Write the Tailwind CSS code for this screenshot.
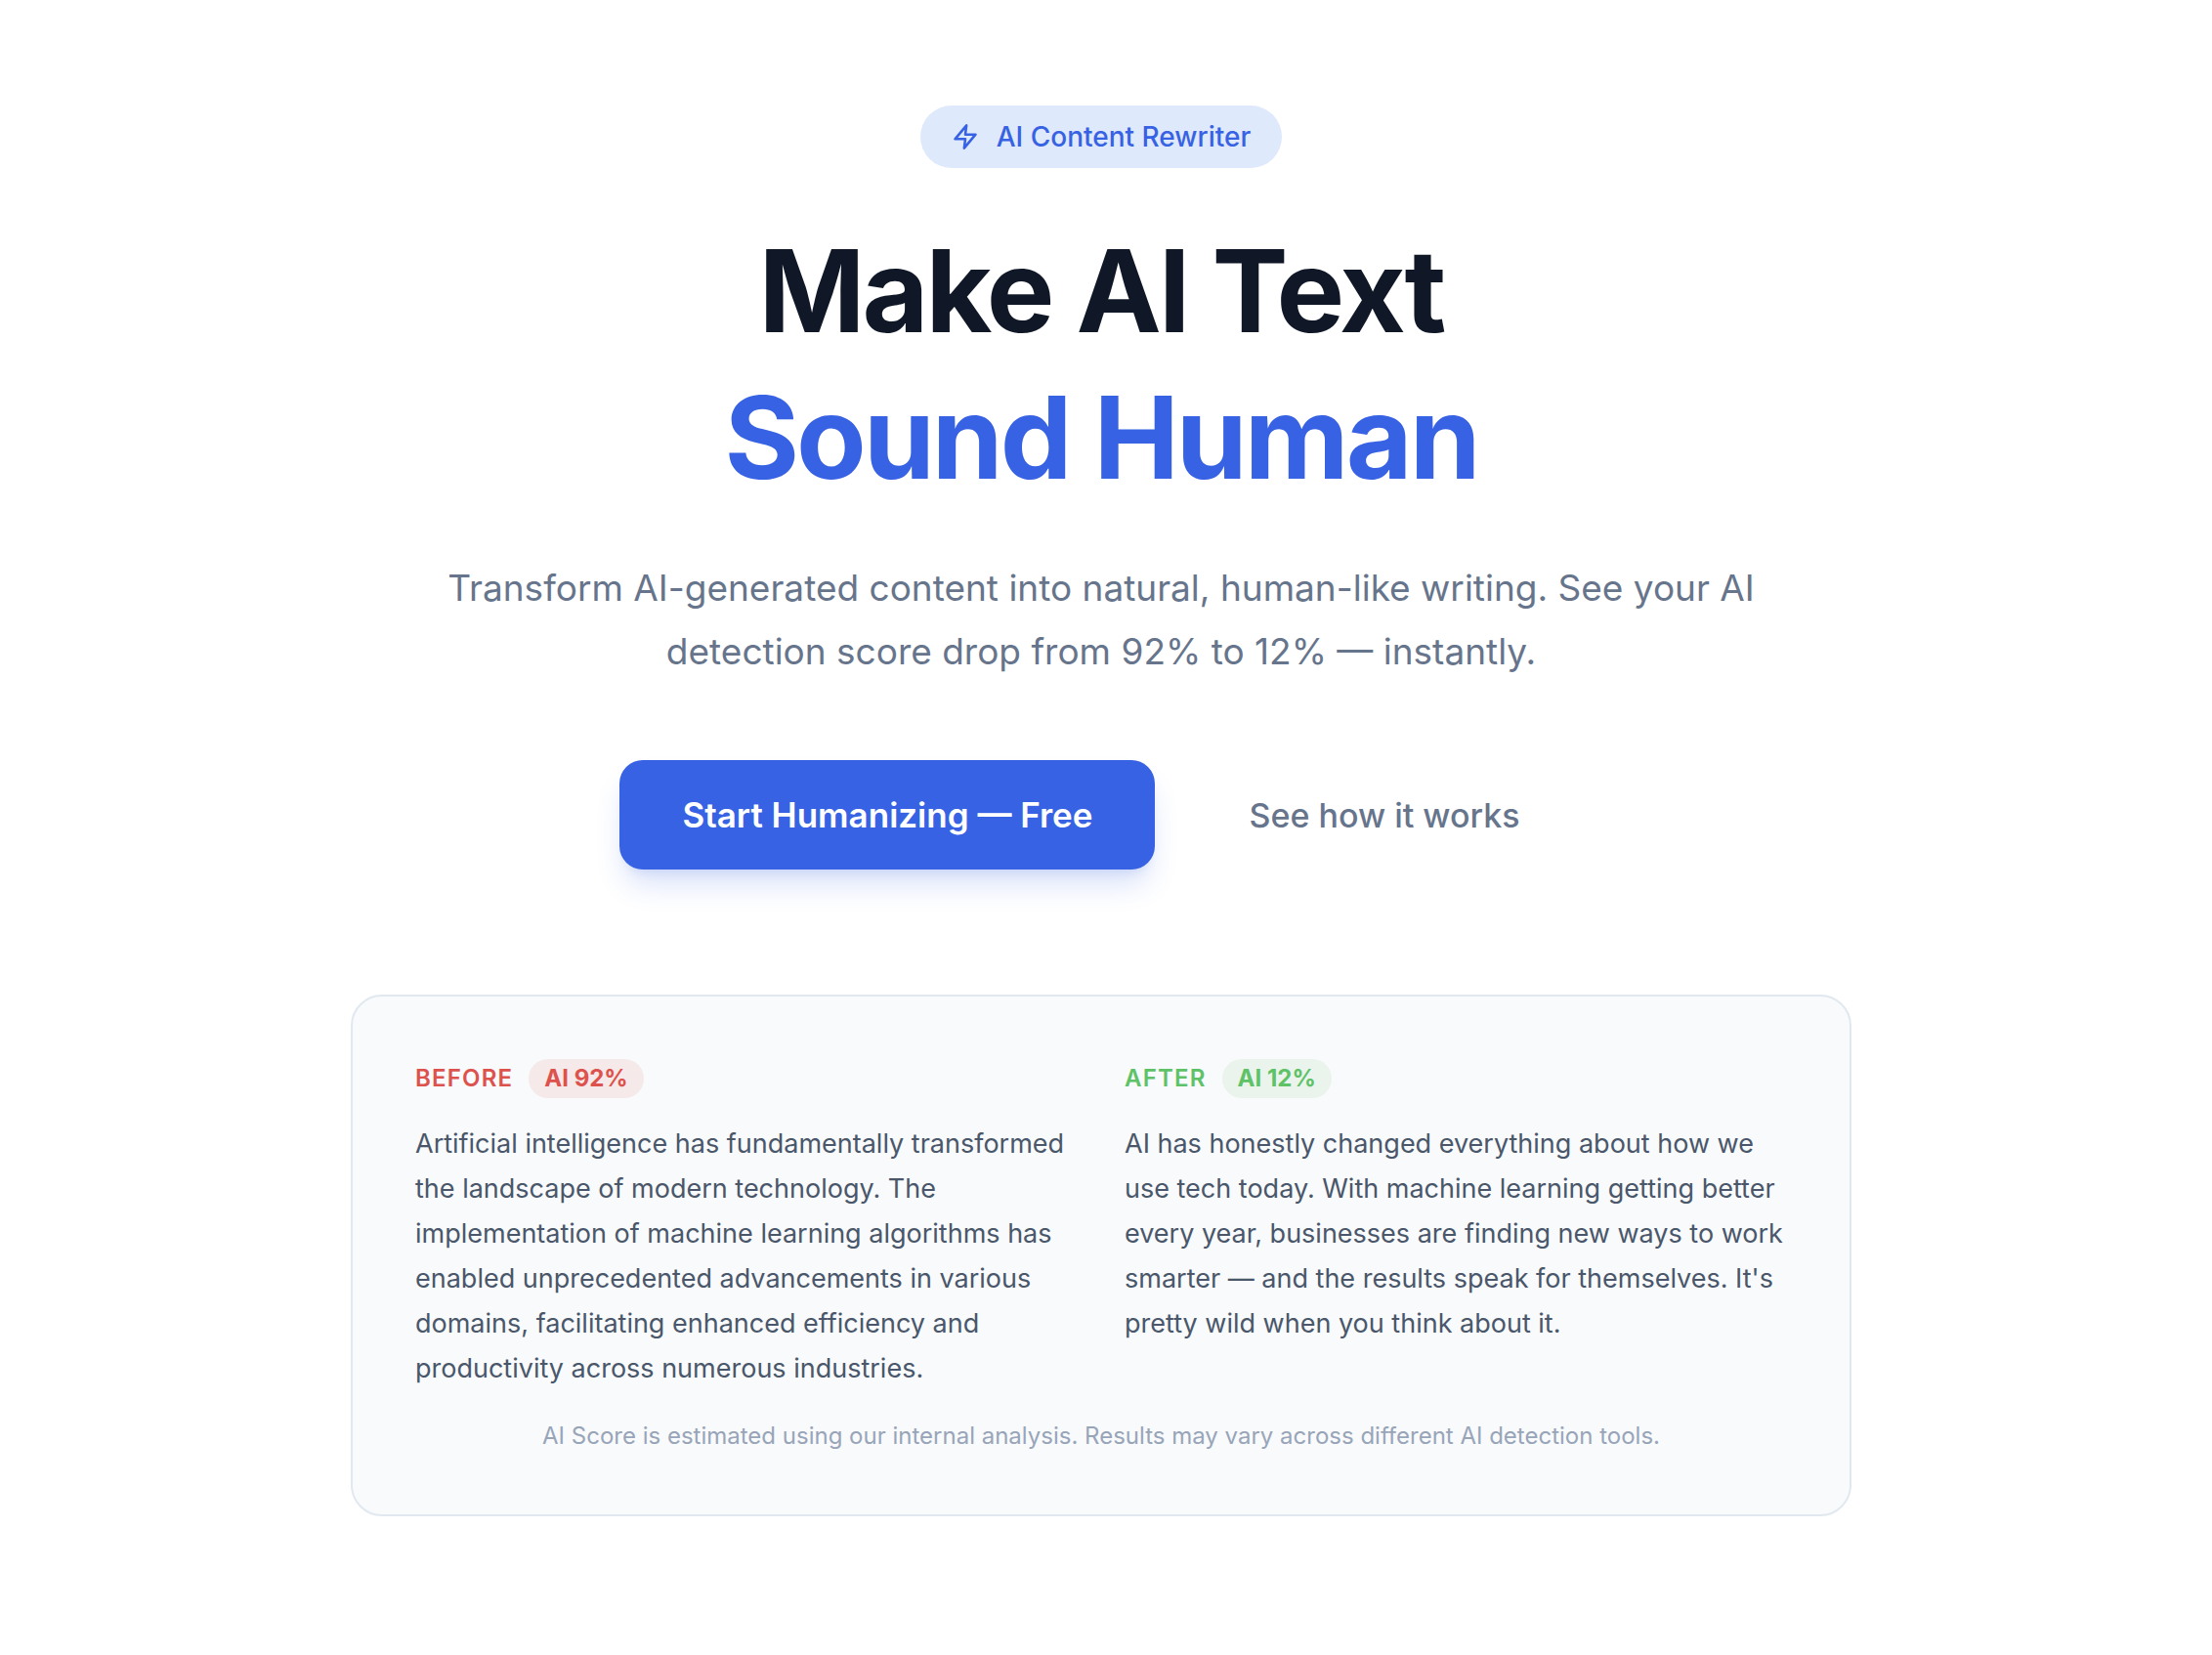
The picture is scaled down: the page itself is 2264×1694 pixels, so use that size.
<!DOCTYPE html>
<html lang="en">
<head>
    <meta charset="UTF-8">
    <meta name="viewport" content="width=device-width, initial-scale=1.0">
    <title>AI Content Rewriter</title>

    <!-- Tailwind CSS CDN -->
    <script src="https://cdn.jsdelivr.net/npm/@tailwindcss/browser@4"></script>
</head>
<body class="bg-white font-['Inter',sans-serif] antialiased">

    <!-- Hero -->
    <main class="flex flex-col items-center pt-27 pb-36 pl-8 pr-[42px] text-center">

        <!-- Badge -->
        <div class="inline-flex h-16 items-center gap-[18px] rounded-full bg-[#dee9fb] px-8 text-[28px] font-medium text-[#3762e3]">
            <svg class="size-7" viewBox="0 0 24 24" fill="none" stroke="currentColor" stroke-width="2.2" stroke-linecap="round" stroke-linejoin="round" aria-hidden="true">
                <polygon points="13 2 3 14 12 14 11 22 21 10 12 10 13 2" />
            </svg>
            <span>AI Content Rewriter</span>
        </div>

        <!-- Headline -->
        <h1 class="mt-[51px] text-[117px] leading-[150px] font-bold tracking-tight text-[#101828]">
            Make AI Text<br>
            <span class="text-[#3762e3]">Sound Human</span>
        </h1>

        <p class="mt-[46px] max-w-[1344px] text-[37px] leading-[65px] text-[#67758c]">
            Transform AI-generated content into natural, human-like writing. See your AI detection score drop from 92% to 12% — instantly.
        </p>

        <!-- Actions -->
        <div class="mt-[79px] flex items-center justify-center gap-8">
            <button type="button" class="h-28 rounded-3xl bg-[#3762e3] px-16 text-[35px] font-semibold text-white shadow-[0_20px_30px_-6px_rgba(55,98,227,0.2),0_8px_12px_-8px_rgba(55,98,227,0.2)] hover:bg-blue-700">
                Start Humanizing — Free
            </button>
            <a href="#demo" class="flex h-28 items-center px-16 text-[34px] font-medium text-[#67758c] hover:text-slate-900">See how it works</a>
        </div>

        <!-- Before / after demo -->
        <section id="demo" class="mt-32 w-full max-w-[1536px] rounded-4xl border-2 border-slate-200 bg-slate-50 p-16">
            <div class="grid grid-cols-2 gap-12 text-left">
                <div>
                    <div class="flex items-center gap-4 text-2xl">
                        <h2 class="font-semibold tracking-wider text-[#dd524c] uppercase">Before</h2>
                        <span class="flex h-10 items-center rounded-full bg-[#f6e9ea] px-4 font-bold text-[#dd524c]">AI 92%</span>
                    </div>
                    <p class="mt-6 text-[27px] leading-[46px] text-[#4a576a]">
                        Artificial intelligence has fundamentally transformed the landscape of modern technology. The implementation of machine learning algorithms has enabled unprecedented advancements in various domains, facilitating enhanced efficiency and productivity across numerous industries.
                    </p>
                </div>
                <div>
                    <div class="flex items-center gap-4 text-2xl">
                        <h2 class="font-semibold tracking-wider text-[#5fc267] uppercase">After</h2>
                        <span class="flex h-10 items-center rounded-full bg-[#eaf4ed] px-4 font-bold text-[#5fc267]">AI 12%</span>
                    </div>
                    <p class="mt-6 text-[27px] leading-[46px] text-[#4a576a]">
                        AI has honestly changed everything about how we use tech today. With machine learning getting better every year, businesses are finding new ways to work smarter — and the results speak for themselves. It's pretty wild when you think about it.
                    </p>
                </div>
            </div>
            <p class="mt-[30px] text-2xl text-[#98a5b9]">
                AI Score is estimated using our internal analysis. Results may vary across different AI detection tools.
            </p>
        </section>

    </main>

</body>
</html>
